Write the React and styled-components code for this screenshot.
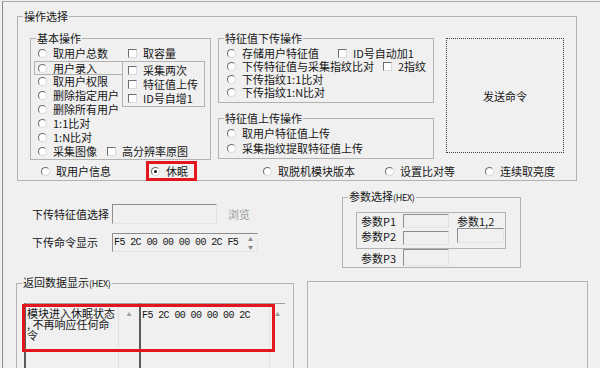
import React from "react";
import styled, { createGlobalStyle } from "styled-components";

const GlobalStyle = createGlobalStyle`
  html, body {
    margin: 0;
    padding: 0;
    background: #f0f0f0;
  }
  body {
    font-family: "Noto Sans CJK SC", "Liberation Sans", sans-serif;
    font-size: 11px;
    color: #161616;
  }
`;

const Page = styled.div`
  width: 600px;
  height: 368px;
  overflow: hidden;
  box-sizing: border-box;
  padding: 1px 0 0 2px;
  background: #f0f0f0;
`;

const Window = styled.div`
  height: 100%;
  box-sizing: border-box;
  border-top: 1px solid #a8a8a8;
  border-left: 1px solid #8a8a8a;
  display: flex;
  flex-direction: column;
`;

// fieldset keeps the caption sitting on the border line
const Group = styled.fieldset`
  margin: 0;
  padding: 0;
  min-width: 0;
  box-sizing: border-box;
  border: 1px solid #b2b2b2;
  width: ${(p) => p.$w}px;
  height: ${(p) => p.$h}px;
  flex: none;
`;

const Legend = styled.legend`
  padding: 0 1px;
  margin-left: 5px;
  font-size: 11px;
  line-height: 12px;
  white-space: nowrap;
`;

const Hex = styled.span`
  font-size: 9px;
  letter-spacing: -0.3px;
`;

const Body = styled.div`
  padding: ${(p) => p.$pad || "0"};
  display: flex;
  flex-direction: column;
  position: relative;
`;

const Radio = styled.span`
  width: 9px;
  height: 9px;
  box-sizing: border-box;
  border-radius: 50%;
  border: 1px solid;
  border-color: #6e6e6e #dadada #dadada #6e6e6e;
  background: #fff;
  margin-right: 6px;
  flex: none;
  position: relative;

  &::after {
    content: "";
    display: ${(p) => (p.$checked ? "block" : "none")};
    position: absolute;
    left: 2px;
    top: 2px;
    width: 3px;
    height: 3px;
    border-radius: 50%;
    background: #111;
  }
`;

const Check = styled.span`
  width: 9px;
  height: 9px;
  box-sizing: border-box;
  border: 1px solid;
  border-color: #6e6e6e #dadada #dadada #6e6e6e;
  background: #fff;
  margin-left: ${(p) => p.$gap || 0}px;
  margin-right: 6px;
  flex: none;
`;

const Row = styled.div`
  display: flex;
  align-items: center;
  height: ${(p) => p.$h || 14}px;
  line-height: ${(p) => p.$h || 14}px;
  padding-left: ${(p) => p.$indent || 0}px;
  white-space: nowrap;
  box-sizing: border-box;
  grid-column: ${(p) => p.$col || "auto"};
`;

const FramedRow = styled(Row)`
  margin: 1px 0 0 3px;
  padding-left: 3px;
  border: 1px solid #b2b2b2;
  border-right: none;
`;

const TopArea = styled.div`
  display: flex;
  align-items: flex-start;
  gap: 7px;
`;

const BasicGrid = styled.div`
  display: grid;
  grid-template-columns: 91px 1fr;
  grid-template-rows: repeat(8, 14px);
  padding-top: 2px;
`;

const SubBox = styled.div`
  grid-column: 2;
  grid-row: 2 / span 3;
  margin-top: 1px;
  height: 46px;
  width: 83px;
  box-sizing: border-box;
  border: 1px solid #b2b2b2;
  padding: 1px 0 0 5px;
`;

const MidColumn = styled.div`
  display: flex;
  flex-direction: column;
  gap: 9px;
`;

const SendButton = styled.button`
  width: 118px;
  height: 115px;
  margin: 6px 0 0 5px;
  box-sizing: border-box;
  border: 1px dotted #3c3c3c;
  background: transparent;
  font-family: inherit;
  font-size: 11px;
  color: #161616;
  padding: 0;
`;

const OptionRow = styled.div`
  display: grid;
  grid-template-columns: 110px 112px 122px 100px auto;
  margin-top: 4px;
  padding-left: 11px;
  height: 14px;
`;

const Highlight = styled.div`
  display: inline-flex;
  align-items: center;
  align-self: start;
  justify-self: start;
  margin: -3px 0 0 -5px;
  padding: 0 6px 0 2px;
  height: 20px;
  box-sizing: border-box;
  border: 3px solid #e3161f;
  line-height: 14px;
  white-space: nowrap;
`;

const MiddleRow = styled.div`
  display: flex;
  height: 95px;
  flex: none;
`;

const FormColumn = styled.div`
  margin-left: 29px;
  width: 310px;
  padding-top: 23px;
  display: flex;
  flex-direction: column;
  gap: 8px;
`;

const FormRow = styled.div`
  display: flex;
  align-items: center;
  height: 20px;
`;

const FieldLabel = styled.span`
  width: ${(p) => p.$w || 80}px;
  flex: none;
  white-space: nowrap;
`;

const Sunken = styled.div`
  width: ${(p) => p.$w}px;
  height: ${(p) => p.$h}px;
  margin-top: ${(p) => p.$top || 0}px;
  box-sizing: border-box;
  border: 1px solid;
  border-color: #8e8e8e #e4e4e4 #e4e4e4 #8e8e8e;
  background: #f0f0f0;
  flex: none;
`;

const Browse = styled.span`
  margin-left: 11px;
  color: #9c9c9c;
`;

const CmdBox = styled(Sunken)`
  display: flex;
  align-items: center;
  padding-left: 1px;
`;

const Mono = styled.span`
  font-family: "Liberation Mono", monospace;
  font-size: 10px;
  letter-spacing: -0.6px;
  white-space: pre;
  line-height: 11px;
`;

const Spin = styled.div`
  margin-left: auto;
  width: 13px;
  height: 100%;
  display: flex;
  flex-direction: column;
  justify-content: space-between;
  align-items: center;
  font-size: 5px;
  line-height: 8px;
  color: #8a8a8a;
  padding: 1px 0;
  box-sizing: border-box;
`;

const ParamGrid = styled.div`
  width: 150px;
  height: 37px;
  box-sizing: border-box;
  border: 1px solid #b2b2b2;
  padding-left: 4px;
  display: grid;
  grid-template-columns: 42px 46px 8px 47px;
  grid-template-rows: 15px 20px;
  align-items: center;
  white-space: nowrap;
`;

const Cell = styled.div`
  grid-column: ${(p) => p.$col};
  align-self: ${(p) => p.$align || "center"};
  margin-top: ${(p) => p.$top || 0}px;
  line-height: 14px;
`;

const P3Row = styled.div`
  display: flex;
  align-items: center;
  padding-left: 5px;
  height: 17px;
  white-space: nowrap;
`;

const BottomRow = styled.div`
  display: flex;
  align-items: flex-start;
`;

const Areas = styled.div`
  display: flex;
  height: 80px;
`;

const TextArea = styled.div`
  width: ${(p) => p.$w}px;
  box-sizing: border-box;
  border-top: 1px solid #a0a0a0;
  border-left: 2px solid #5a5a5a;
  display: flex;
`;

const AreaText = styled.div`
  flex: 1;
  padding: 4px 0 0 1px;
  white-space: pre;
  line-height: 11px;
  font-size: 11px;
`;

const ScrollBar = styled.div`
  width: ${(p) => p.$w}px;
  border-left: 1px solid #e2e2e2;
  text-align: center;
  font-size: 5px;
  line-height: 14px;
  color: #9a9a9a;
  padding-top: 3px;
`;

const RedFrame = styled.div`
  position: absolute;
  left: 5px;
  top: 14px;
  width: 253px;
  height: 48px;
  box-sizing: border-box;
  border: 3px solid #e3161f;
`;

const PlainBox = styled.div`
  margin: 5px 0 0 13px;
  width: 281px;
  height: 100px;
  box-sizing: border-box;
  border: 1px solid #b2b2b2;
`;

const R = ({ children, checked }) => (
  <>
    <Radio $checked={checked} />
    {children}
  </>
);

const App = () => {
  return (
    <Page>
      <GlobalStyle />
      <Window>
        <Group $w={560} $h={171} style={{ margin: "8px 0 0 14px" }}>
          <Legend>操作选择</Legend>
          <Body $pad="10px 0 0 12px">
            <TopArea>
              <Group $w={181} $h={128}>
                <Legend>基本操作</Legend>
                <BasicGrid>
                  <Row $col={1} $indent={7}>
                    <R>取用户总数</R>
                  </Row>
                  <Row $col={2} $indent={6}>
                    <Check />
                    取容量
                  </Row>
                  <FramedRow $col={1}>
                    <R>用户录入</R>
                  </FramedRow>
                  <SubBox>
                    <Row>
                      <Check />
                      采集两次
                    </Row>
                    <Row>
                      <Check />
                      特征值上传
                    </Row>
                    <Row>
                      <Check />
                      ID号自增1
                    </Row>
                  </SubBox>
                  <Row $col={1} $indent={7}>
                    <R>取用户权限</R>
                  </Row>
                  <Row $col={1} $indent={7}>
                    <R>删除指定用户</R>
                  </Row>
                  <Row $col={1} $indent={7}>
                    <R>删除所有用户</R>
                  </Row>
                  <Row $col={1} $indent={7}>
                    <R>1:1比对</R>
                  </Row>
                  <Row $col={1} $indent={7}>
                    <R>1:N比对</R>
                  </Row>
                  <Row $col="1 / span 2" $indent={7}>
                    <R>采集图像</R>
                    <Check $gap={10} />
                    高分辨率原图
                  </Row>
                </BasicGrid>
              </Group>

              <MidColumn>
                <Group $w={216} $h={71}>
                  <Legend>特征值下传操作</Legend>
                  <Body $pad="3px 0 0 8px">
                    <Row $h={13}>
                      <R>存储用户特征值</R>
                      <Check $gap={19} />
                      ID号自动加1
                    </Row>
                    <Row $h={13}>
                      <R>下传特征值与采集指纹比对</R>
                      <Check $gap={9} />
                      2指纹
                    </Row>
                    <Row $h={13}>
                      <R>下传指纹1:1比对</R>
                    </Row>
                    <Row $h={13}>
                      <R>下传指纹1:N比对</R>
                    </Row>
                  </Body>
                </Group>
                <Group $w={216} $h={47}>
                  <Legend>特征值上传操作</Legend>
                  <Body $pad="2px 0 0 8px">
                    <Row $h={15}>
                      <R>取用户特征值上传</R>
                    </Row>
                    <Row $h={15}>
                      <R>采集指纹提取特征值上传</R>
                    </Row>
                  </Body>
                </Group>
              </MidColumn>

              <SendButton>发送命令</SendButton>
            </TopArea>

            <OptionRow>
              <Row>
                <R>取用户信息</R>
              </Row>
              <Highlight>
                <R checked>休眠</R>
              </Highlight>
              <Row>
                <R>取脱机模块版本</R>
              </Row>
              <Row>
                <R>设置比对等</R>
              </Row>
              <Row>
                <R>连续取亮度</R>
              </Row>
            </OptionRow>
          </Body>
        </Group>

        <MiddleRow>
          <FormColumn>
            <FormRow>
              <FieldLabel>下传特征值选择</FieldLabel>
              <Sunken $w={105} $h={20} />
              <Browse>浏览</Browse>
            </FormRow>
            <FormRow>
              <FieldLabel>下传命令显示</FieldLabel>
              <CmdBox $w={146} $h={19}>
                <Mono>F5 2C 00 00 00 00 2C F5</Mono>
                <Spin>
                  <span>▲</span>
                  <span>▼</span>
                </Spin>
              </CmdBox>
            </FormRow>
          </FormColumn>

          <Group $w={179} $h={78} style={{ marginTop: 9 }}>
            <Legend>
              参数选择<Hex>(HEX)</Hex>
            </Legend>
            <Body $pad="8px 0 0 13px">
              <ParamGrid>
                <Cell $col={1}>参数P1</Cell>
                <Cell $col={2}>
                  <Sunken $w={46} $h={14} />
                </Cell>
                <Cell $col={4}>参数1,2</Cell>
                <Cell $col={1} $align="start" $top={1}>
                  参数P2
                </Cell>
                <Cell $col={2} $align="start">
                  <Sunken $w={46} $h={14} $top={3} />
                </Cell>
                <Cell $col={4} $align="start">
                  <Sunken $w={47} $h={15} />
                </Cell>
              </ParamGrid>
              <P3Row>
                <FieldLabel $w={42}>参数P3</FieldLabel>
                <Sunken $w={46} $h={17} />
              </P3Row>
            </Body>
          </Group>
        </MiddleRow>

        <BottomRow>
          <Group $w={278} $h={110} style={{ marginLeft: 13 }}>
            <Legend>
              返回数据显示<Hex>(HEX)</Hex>
            </Legend>
            <Body $pad="13px 0 0 7px">
              <Areas>
                <TextArea $w={115}>
                  <AreaText>{"模块进入休眠状态\n, 不再响应任何命\n令"}</AreaText>
                  <ScrollBar $w={20}>▲</ScrollBar>
                </TextArea>
                <TextArea $w={146}>
                  <AreaText>
                    <Mono>F5 2C 00 00 00 00 2C</Mono>
                  </AreaText>
                  <ScrollBar $w={15}>▲</ScrollBar>
                </TextArea>
              </Areas>
              <RedFrame />
            </Body>
          </Group>
          <PlainBox />
        </BottomRow>
      </Window>
    </Page>
  );
};

export default App;
